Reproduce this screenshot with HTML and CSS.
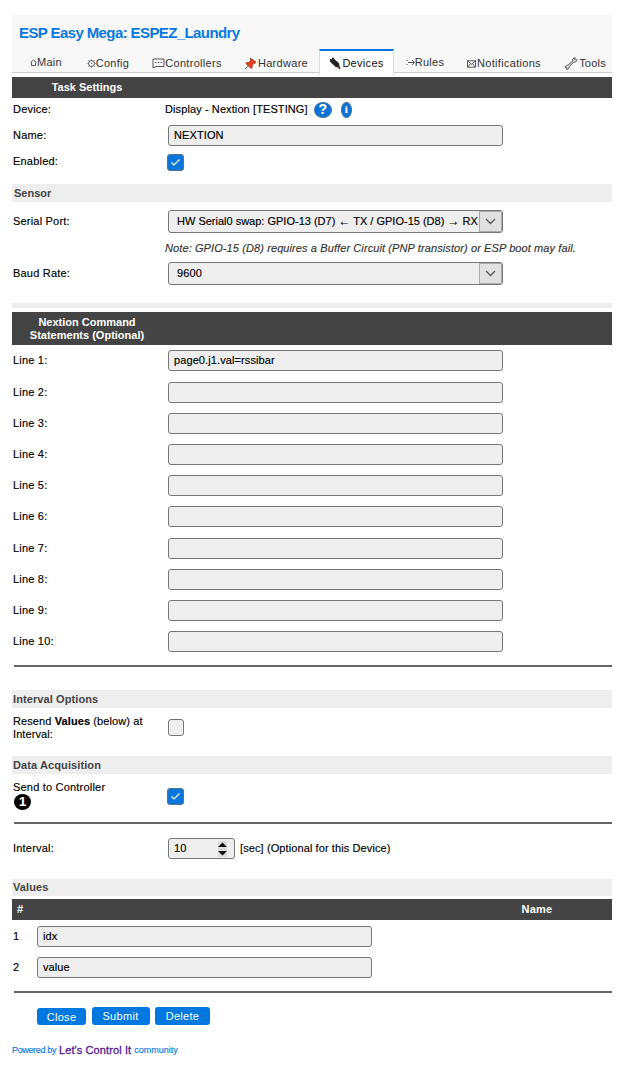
FILE: index.html
```
<!DOCTYPE html>
<html lang="en">
<head>
<meta charset="utf-8">
<title>ESPEZ_Laundry</title>
<link rel="stylesheet" href="styles.css">
</head>
<body>
<div class="page">
<header class="header">
<h1>ESP Easy Mega: ESPEZ_Laundry</h1>
<nav class="tabs">
<a class="tab up"><svg width="7" height="7" viewBox="0 0 7 7"><path d="M.5 3.5 3.5 1l3 2.5M1.5 3.5v3h4v-3"/></svg><span>Main</span></a>
<a class="tab"><svg width="9" height="9" viewBox="0 0 9 9"><circle cx="4.5" cy="4.5" r="3"/><path d="M4.5 .5v1M4.5 7.5v1M.5 4.5h1M7.5 4.5h1M1.5 1.5l.8.8M7.5 1.5l-.8.8M1.5 7.5l.8-.8M7.5 7.5l-.8-.8"/><circle cx="4.5" cy="4.5" r=".3"/></svg><span>Config</span></a>
<a class="tab"><svg width="13" height="11" viewBox="0 0 13 11"><path d="M1 1h11v7.5H4L1 10zM3 4.5h1.5M5.8 4.5h1.5M8.6 4.5h1.5"/></svg><span>Controllers</span></a>
<a class="tab hardware"><svg width="13" height="13" viewBox="0 0 13 13"><path d="M5 8 1 12" stroke="#555"/><path d="M6.5 1 12 5l-.8 1.2-1.5.2-1.5 2 .2 2L7 11.5 1.8 6.5l.8-1 2 .1L6.5 3.5z" fill="#e8401c" stroke="#8c3a2a" stroke-width=".7"/></svg><span>Hardware</span></a>
<a class="tab active"><svg width="12" height="13" viewBox="0 0 12 13"><path d="M2 4.5 4 2l5 4.5.7 2.5-2.5.3zM1 2.5 3 4M3.5.8 4.8 3M8.5 8l2.5 3.8" fill="#222" stroke="#222" stroke-width="1.7"/></svg><span>Devices</span></a>
<a class="tab up"><svg width="9" height="9" viewBox="0 0 9 9"><path d="M.5 2.5h1M2 4.5h6M.5 6.5h1M6 2l2.5 2.5L6 7"/></svg><span>Rules</span></a>
<a class="tab notif"><svg width="9" height="8" viewBox="0 0 9 8"><path d="M.5.8h8v6.4h-8zl4 3.5 4-3.5M.5 7.2l3-3.5M8.5 7.2l-3-3.5"/></svg><span>Notifications</span></a>
<a class="tab tools"><svg width="14" height="13" viewBox="0 0 14 13"><path d="M1 10.2 2.7 8.5l1.2-.2L8.8 4 8.6 2.4 10.2.8l1 .1-.6 1.3.8.8 1.3-.5.2 1-1.5 1.6-1.8.1-4.5 4.4-.1 1.2-1.6 1.5-.9-.1.5-1.3-.6-.8z" stroke-width="1"/></svg><span>Tools</span></a>
</nav>
</header>

<div class="dark"><span class="dark-label">Task Settings</span></div>
<div class="row r-device"><label>Device:</label><div class="plain"><span>Display - Nextion [TESTING]</span><span class="help">?</span><span class="info">i</span></div></div>
<div class="row r-name"><label>Name:</label><div class="field">NEXTION</div></div>
<div class="row r-enabled"><label>Enabled:</label><div class="check on"><svg width="11" height="9" viewBox="0 0 11 9"><path d="M1.5 4.5 4 7l5.5-5.5"/></svg></div></div>

<div class="bar sensor">Sensor</div>
<div class="row r-serial"><label>Serial Port:</label><div class="select"><span class="serial">HW Serial0 swap: GPIO-13 (D7) <b>←</b> TX / GPIO-15 (D8) <b>→</b> RX</span><i><svg width="11" height="7" viewBox="0 0 11 7"><path d="M1 1l4.5 4.5L10 1"/></svg></i></div></div>
<div class="row r-note"><label></label><div class="plain"><em>Note: GPIO-15 (D8) requires a Buffer Circuit (PNP transistor) or ESP boot may fail.</em></div></div>
<div class="row r-baud"><label>Baud Rate:</label><div class="select"><span>9600</span><i><svg width="11" height="7" viewBox="0 0 11 7"><path d="M1 1l4.5 4.5L10 1"/></svg></i></div></div>
<div class="bar thin"></div>

<div class="dark tall"><span class="dark-label">Nextion Command<br>Statements (Optional)</span></div>
<div class="lines">
<div class="row"><label>Line 1:</label><div class="field">page0.j1.val=rssibar</div></div>
<div class="row"><label>Line 2:</label><div class="field"></div></div>
<div class="row"><label>Line 3:</label><div class="field"></div></div>
<div class="row"><label>Line 4:</label><div class="field"></div></div>
<div class="row"><label>Line 5:</label><div class="field"></div></div>
<div class="row"><label>Line 6:</label><div class="field"></div></div>
<div class="row"><label>Line 7:</label><div class="field"></div></div>
<div class="row"><label>Line 8:</label><div class="field"></div></div>
<div class="row"><label>Line 9:</label><div class="field"></div></div>
<div class="row"><label>Line 10:</label><div class="field"></div></div>
</div>
<div class="rule rule-lines"></div>

<div class="bar">Interval Options</div>
<div class="row r-resend"><label>Resend <b>Values</b> (below) at<br>Interval:</label><div class="check"></div></div>
<div class="bar">Data Acquisition</div>
<div class="row r-send"><label><span>Send to Controller</span><span class="num">1</span></label><div class="check on"><svg width="11" height="9" viewBox="0 0 11 9"><path d="M1.5 4.5 4 7l5.5-5.5"/></svg></div></div>
<div class="rule"></div>
<div class="row r-interval"><label>Interval:</label><div class="field number"><span>10</span><svg width="9" height="16" viewBox="0 0 9 16"><path d="M0 0h9v16H0z" fill="#dcdcdc"/><path d="M0 6l4.5-4.5L9 6zM0 10l4.5 4.5L9 10z" fill="#111"/></svg></div><span class="unit">[sec] (Optional for this Device)</span></div>

<div class="bar values">Values</div>
<div class="dark value-head"><span>#</span><span>Name</span></div>
<div class="value-row"><span>1</span><div class="field">idx</div></div>
<div class="value-row"><span>2</span><div class="field">value</div></div>
<div class="rule rule-end"></div>
<div class="buttons"><a class="close">Close</a><a class="submit">Submit</a><a class="delete">Delete</a></div>
<footer><span>Powered by</span><a>Let's Control It</a><span class="community">community</span></footer>
</div>
</body>
</html>
```
FILE: styles.css
```
* { box-sizing: border-box; }
body { margin: 0; background: #fff; font: 11px/13px "Liberation Sans", Arial, sans-serif; color: #000; letter-spacing: .1px; -webkit-text-stroke: .15px; }
.page { width: 600px; margin: 15px 0 0 12px; white-space: nowrap; }
.header { height: 62px; background: #f8f8f8; border-bottom: 4px solid #fff; }
h1 { margin: 0; padding: 8px 0 0 7px; height: 35px; font-size: 15px; line-height: 20px; color: #0a78e0; letter-spacing: -.6px; -webkit-text-stroke: 0; }
.tabs { display: grid; grid-template-columns: 68px 56px 102px 81px 75px 62px 96px 60px; height: 23px; border-bottom: 1px solid #ccc; letter-spacing: .3px; -webkit-text-stroke: 0; }
.tab { display: flex; align-items: center; justify-content: center; padding-top: 2px; color: #333; }
.tab.up { padding-top: 0; }
.tab svg { fill: none; stroke: #444; stroke-width: .9; }
.tab.hardware { padding-right: 5px; }
.tab.hardware svg, .tab.active svg, .tab.tools svg { margin-right: 1px; }
.tab.tools { padding-left: 6px; letter-spacing: .2px; }
.tab.notif svg { margin-right: 1px; }
.tab.active { height: 26px; margin-top: -1px; padding: 4px 0 3px; background: #fff; border: 1px solid #ddd; border-top: 2px solid #0a72dc; border-bottom: 0; border-radius: 1px 1px 0 0; color: #111; }
.dark { height: 21px; display: flex; align-items: center; background: #444; color: #fff; font-weight: bold; letter-spacing: 0; -webkit-text-stroke: 0; }
.dark-label { width: 150px; text-align: center; }
.dark.tall { height: 33px; }
.row { display: flex; align-items: center; }
.row label { width: 156px; padding-left: 1px; flex: none; letter-spacing: .2px; }
.row .plain { margin-left: -3px; display: flex; align-items: center; }
.r-device { height: 23px; }
.r-name { height: 28px; }
.r-enabled { height: 26px; margin-bottom: 9px; }
.r-enabled label { padding-bottom: 2px; }
.r-serial { height: 38px; }
.r-note { height: 16px; }
.r-baud { height: 35px; margin-bottom: 12px; }
.r-note em { color: #333; }
.help, .info { display: flex; align-items: center; justify-content: center; background: #0a72d8; color: #fff; border: 1px solid #42719c; border-radius: 50%; font-weight: bold; letter-spacing: 0; height: 16px; }
.help { width: 18px; margin-left: 6px; font-size: 14px; }
.info { width: 11px; margin-left: 9px; font: bold 11px/13px "Liberation Serif", serif; }
.field, .select { width: 335px; height: 21px; display: flex; align-items: center; background: #eee; border: 1px solid #777; border-radius: 3px; padding-left: 5px; }
.select { height: 23px; padding-left: 8px; border-color: #777; }
.serial { letter-spacing: 0; }
.serial b { display: inline-block; width: 12px; text-align: center; font-size: 12px; line-height: 11px; letter-spacing: 0; }
.select i { width: 23px; height: 21px; margin-left: auto; flex: none; display: flex; align-items: center; justify-content: center; background: #e1e1e1; border: 1px solid #aaa; }
.select i svg { fill: none; stroke: #555; stroke-width: 1.3; }
.check { width: 16px; height: 17px; display: flex; align-items: center; justify-content: center; background: #eee; border: 1px solid #777; border-radius: 3px; }
.check.on { width: 17px; background: #0a76dc; border-color: #58728c; margin-left: -1px; }
.check svg { fill: none; stroke: #fff; stroke-width: 1.2; }
.bar { height: 18px; display: flex; align-items: center; padding: 1px 0 0 1px; background: #eee; color: #444; font-weight: bold; -webkit-text-stroke: 0; }
.bar.sensor { padding: 0 0 0 2px; letter-spacing: 0; }
.bar.thin { height: 5px; margin-bottom: 4px; }
.lines { padding-top: .4px; }
.lines .row { height: 31.2px; }
.rule { height: 2px; margin-left: 2px; background: #666; }
.rule-lines { margin: 7.6px 0 23px 2px; }
.r-resend { height: 40px; margin-bottom: 8px; }
.r-resend label { letter-spacing: .1px; }
.r-send { height: 46px; margin-bottom: 2px; }
.r-send label { display: flex; flex-direction: column; align-items: flex-start; padding-bottom: 2px; }
.num { width: 17px; height: 16px; margin-left: 1px; border-radius: 50%; background: #000; color: #fff; font-size: 13px; line-height: 16px; font-weight: bold; text-align: center; letter-spacing: 0; }
.r-interval { height: 31px; margin: 9px 0 15px; padding-top: 1px; }
.field.number { width: 67px; justify-content: space-between; padding-right: 7px; }
.unit { margin-left: 5px; }
.bar.values { height: 17px; margin-bottom: 3px; }
.value-head { letter-spacing: .2px; }
.value-head span:first-child { width: 450px; padding-left: 5px; }
.value-head span:last-child { width: 150px; text-align: center; }
.value-row { height: 31px; display: flex; align-items: center; padding: 2px 0 0 1px; }
.value-row > span { width: 24px; }
.rule-end { margin-top: 9px; }
.buttons { display: flex; gap: 5.5px; padding: 14px 0 0 25px; align-items: flex-end; letter-spacing: .3px; -webkit-text-stroke: 0; }
.buttons a { height: 18px; line-height: 18px; border-radius: 3px; background: #0078e0; color: #fff; text-align: center; }
.buttons .close { width: 49px; height: 17px; }
.buttons .submit { width: 58px; }
.buttons .delete { width: 55px; }
footer { display: flex; gap: 3px; align-items: center; margin-top: 19px; color: #0a78e0; font-size: 9px; letter-spacing: -.35px; }
footer a { color: #551a8b; font-size: 11px; letter-spacing: .1px; -webkit-text-stroke: .3px; }
footer .community { letter-spacing: 0; }
```
